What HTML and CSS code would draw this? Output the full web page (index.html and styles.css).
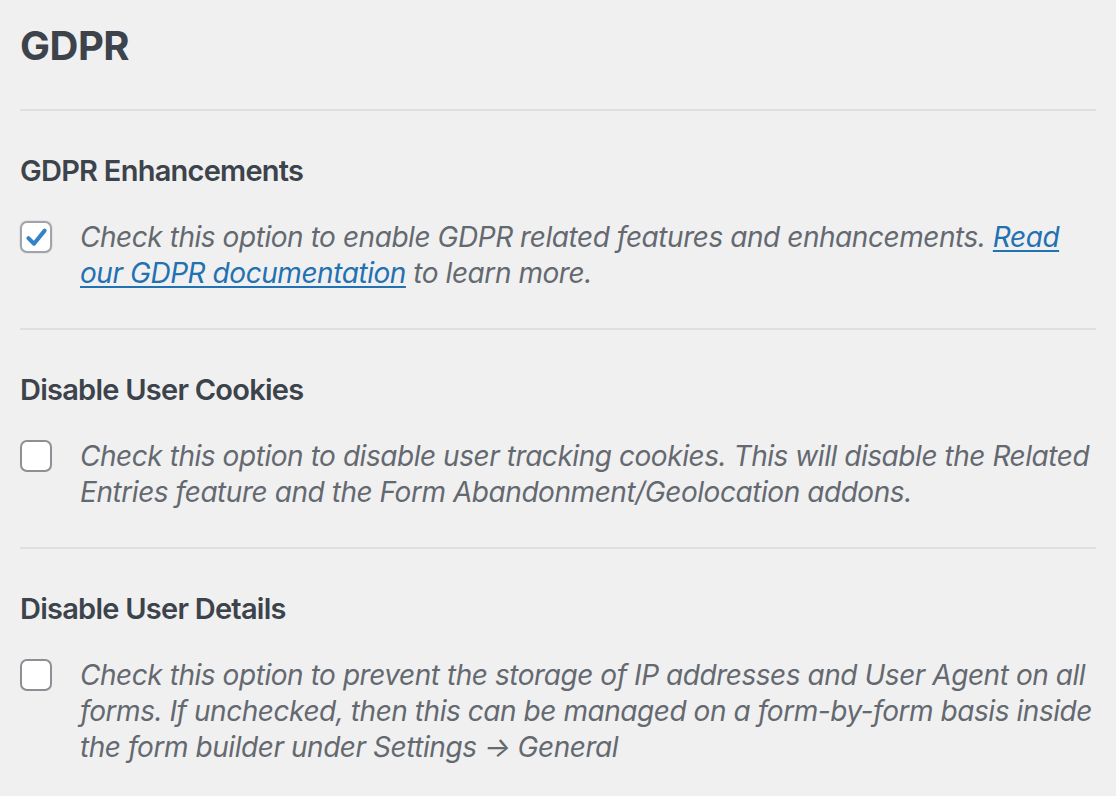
FILE: index.html
```html
<!DOCTYPE html>
<html lang="en">
<head>
<meta charset="utf-8">
<title>GDPR</title>
<link rel="stylesheet" href="styles.css">
</head>
<body>
<div class="page">
  <h1 class="title">GDPR</h1>

  <section class="setting">
    <h2 class="setting-title">GDPR Enhancements</h2>
    <div class="setting-row">
      <span class="checkbox checked">
        <svg viewBox="0 0 20 20" width="25" height="25"><path d="M3.5 10.5 L8 15 L16.5 4.5" fill="none" stroke="#3582c4" stroke-width="3.2" stroke-linecap="round" stroke-linejoin="round"/></svg>
      </span>
      <p class="desc">Check this option to enable GDPR related features and enhancements. <a href="#">Read our GDPR documentation</a> to learn more.</p>
    </div>
  </section>

  <section class="setting">
    <h2 class="setting-title">Disable User Cookies</h2>
    <div class="setting-row">
      <span class="checkbox"></span>
      <p class="desc">Check this option to disable user tracking cookies. This will disable the Related Entries feature and the Form Abandonment/Geolocation addons.</p>
    </div>
  </section>

  <section class="setting">
    <h2 class="setting-title">Disable User Details</h2>
    <div class="setting-row">
      <span class="checkbox"></span>
      <p class="desc">Check this option to prevent the storage of IP addresses and User Agent on all forms. If unchecked, then this can be managed on a form-by-form basis inside the form builder under Settings → General</p>
    </div>
  </section>
</div>
</body>
</html>
```

FILE: styles.css
```css
html, body {
  margin: 0;
  padding: 0;
  background: #f0f0f1;
}

body {
  font-family: Inter, "Noto Sans", sans-serif;
  color: #3c434a;
}

.page {
  padding: 0 20px 0 20px;
}

.title {
  margin: 0;
  padding: 20px 0 37px;
  font-size: 40px;
  line-height: 52px;
  font-weight: 700;
  letter-spacing: -0.5px;
  color: #3c434a;
}

.setting {
  border-top: 2px solid #dfdfe1;
  padding: 40px 0 37px;
}

.setting-title {
  margin: 0 0 28px;
  font-size: 29px;
  line-height: 40px;
  font-weight: 600;
  letter-spacing: -0.75px;
  color: #3c434a;
}

.setting-row {
  display: flex;
  align-items: flex-start;
  gap: 28px;
}

.checkbox {
  flex: none;
  box-sizing: border-box;
  width: 32px;
  height: 32px;
  margin-top: 2px;
  border: 2px solid #8c8f94;
  border-radius: 7px;
  background: #fff;
  display: flex;
  align-items: center;
  justify-content: center;
}

.checkbox.checked {
  border-color: #a0a3a8;
  box-shadow: 0 0 0 1px #e2e3e5;
}

.desc {
  margin: 0;
  font-size: 28px;
  line-height: 36px;
  font-style: italic;
  letter-spacing: -0.45px;
  color: #646970;
}

.desc a {
  color: #2271b1;
  text-decoration: underline;
  text-decoration-thickness: 2px;
  text-underline-offset: 3px;
}
```
